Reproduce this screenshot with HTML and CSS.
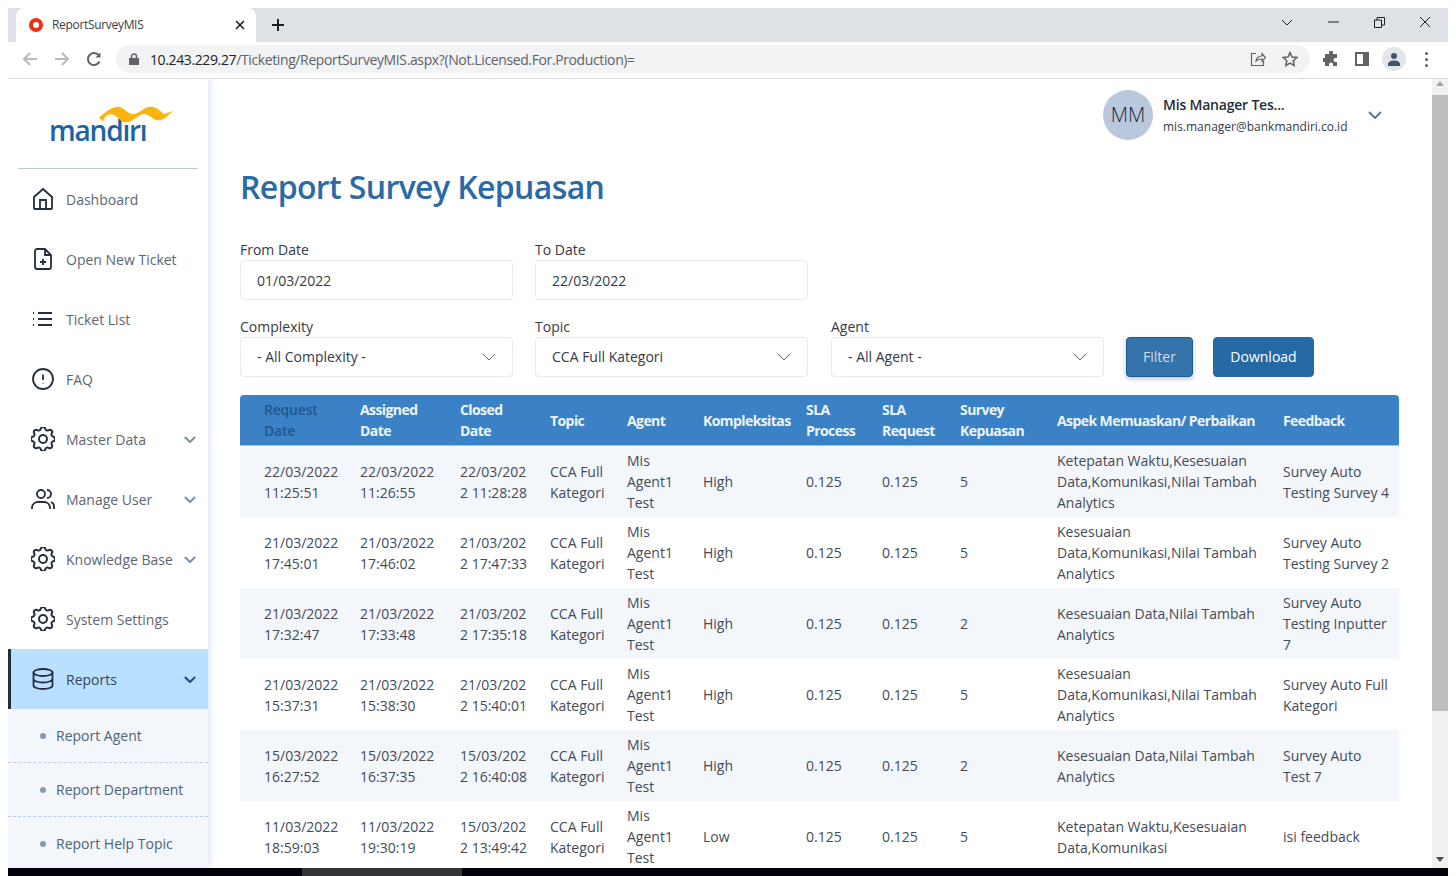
FILE: index.html
```html
<!DOCTYPE html>
<html lang="en">
<head>
    <meta charset="UTF-8">
    <title>ReportSurveyMIS</title>
    <link rel="stylesheet" href="styles.css">
</head>
<body>

<svg class="defs" width="0" height="0">
    <symbol id="cog" viewBox="3 3 18 18">
        <path d="M10.325 4.317c.426-1.756 2.924-1.756 3.35 0a1.724 1.724 0 002.573 1.066c1.543-.94 3.31.826 2.37 2.37a1.724 1.724 0 001.065 2.572c1.756.426 1.756 2.924 0 3.35a1.724 1.724 0 00-1.066 2.573c.94 1.543-.826 3.31-2.37 2.37a1.724 1.724 0 00-2.572 1.065c-.426 1.756-2.924 1.756-3.35 0a1.724 1.724 0 00-2.573-1.066c-1.543.94-3.31-.826-2.37-2.37a1.724 1.724 0 00-1.065-2.572c-1.756-.426-1.756-2.924 0-3.35a1.724 1.724 0 001.066-2.573c-.94-1.543.826-3.31 2.37-2.37.996.608 2.296.07 2.572-1.065z"/>
        <path d="M15 12a3 3 0 11-6 0 3 3 0 016 0z"/>
    </symbol>
    <symbol id="chev" viewBox="0 0 14 8">
        <path d="M1 1l6 6 6-6"/>
    </symbol>
</svg>

<div id="window">
    <div id="tabstrip">
        <div class="tab">
            <svg class="favicon" width="14" height="14" viewBox="0 0 14 14"><circle cx="7" cy="7" r="5" fill="none" stroke="#f03010" stroke-width="4"/></svg>
            <span class="tab-title">ReportSurveyMIS</span>
            <svg class="tab-close" width="10" height="10" viewBox="0 0 10 10"><path d="M1 1l8 8M9 1l-8 8"/></svg>
        </div>
        <svg class="tab-new" width="14" height="14" viewBox="0 0 14 14"><path d="M7 1v12M1 7h12"/></svg>
        <div class="win-btns">
            <span class="win-btn"><svg width="12" height="7" viewBox="0 0 12 7"><path d="M1 1l5 5 5-5"/></svg></span>
            <span class="win-btn"><svg width="11" height="2" viewBox="0 0 11 2"><path d="M0 1h11"/></svg></span>
            <span class="win-btn"><svg width="11" height="11" viewBox="0 0 11 11"><path d="M.5 3h7v7.500h-7zM3 3V.5h7.500V8H7.500"/></svg></span>
            <span class="win-btn"><svg width="12" height="12" viewBox="0 0 12 12"><path d="M1 1l10 10M11 1L1 11"/></svg></span>
        </div>
    </div>

    <div id="toolbar">
        <span class="tool-btn"><svg width="16" height="16" viewBox="0 0 16 16" class="off"><path d="M15 8H2M8 2L2 8l6 6"/></svg></span>
        <span class="tool-btn"><svg width="16" height="16" viewBox="0 0 16 16" class="off"><path d="M1 8h13M8 2l6 6-6 6"/></svg></span>
        <span class="tool-btn"><svg width="16" height="16" viewBox="0 0 16 16" class="on"><path d="M13.500 10.500A6 6 0 1 1 13 4.700"/><path class="solid" d="M14.500 1.500v5h-5z"/></svg></span>
        <div class="urlbar">
            <svg class="lock" width="10" height="12" viewBox="0 0 10 12"><path class="solid" d="M0 5h10v7H0z"/><path class="ring" d="M2.500 5V3.500a2.500 2.500 0 0 1 5 0V5"/></svg>
            <span class="url"><b>10.243.229.27</b>/Ticketing/ReportSurveyMIS.aspx?(Not.Licensed.For.Production)=</span>
            <svg class="url-icon" width="16" height="16" viewBox="0 0 16 16"><path d="M6 2.500H1.500v12h12V10M6 10c.5-3 3-5 6-5V2.500L15.500 6.500 12 10.500V8c-2.500 0-4.500.5-6 2z"/></svg>
            <svg class="url-icon star" width="16" height="16" viewBox="0 0 16 16"><path d="M8 1.500l2 4.500 4.800.5-3.600 3.200 1 4.800L8 12.100l-4.200 2.400 1-4.800L1.200 6.500 6 6z"/></svg>
        </div>
        <span class="tool-btn"><svg class="puzzle" width="16" height="16" viewBox="0 0 16 16"><path class="solid" d="M6 1.500a2 2 0 0 1 4 0V3h4v4h-1.500a2 2 0 0 0 0 4H14v4h-4v-1.500a2 2 0 0 0-4 0V15H2v-4H.5a2 2 0 0 1 0-4H2V3h4z"/></svg></span>
        <span class="tool-btn"><svg width="14" height="14" viewBox="0 0 14 14"><path class="solid" fill-rule="evenodd" d="M0 0h14v14H0zM2 2v10h6V2z"/></svg></span>
        <span class="tool-btn"><span class="profile"><svg width="14" height="14" viewBox="0 0 14 14"><circle cx="7" cy="4" r="3" fill="#47536b"/><path fill="#47536b" d="M1 14v-2c0-2 3-3.500 6-3.500s6 1.500 6 3.500v2z"/></svg></span></span>
        <span class="tool-btn dots"><i></i><i></i><i></i></span>
    </div>

    <div id="page">
        <div id="sidebar">
            <div class="logo" aria-label="mandiri">
                <svg class="logo-wave" width="76" height="18" viewBox="0 0 76 22" preserveAspectRatio="none"><path d="M1 14C8 7 13 2 19 1c7-1 10 9 16 9 6 0 10-8 17-9 6-1 12 7 14 9l9-4-8 9c-2 1-6 3-9 2-5-2-8-8-13-7-6 1-10 10-17 10C22 20 18 9 12 10 8 11 6 15 5 19z"/></svg>
                <span class="logo-text">mandırı</span>
            </div>
            <ul class="nav">
                <li class="nav-item">
                    <svg class="nav-icon" width="24" height="24" viewBox="0 0 24 24"><path d="M3 21V10l9-8 9 8v11a1 1 0 0 1-1 1H4a1 1 0 0 1-1-1zM9 22V13h6v9"/></svg>
                    <span>Dashboard</span>
                </li>
                <li class="nav-item">
                    <svg class="nav-icon" width="24" height="24" viewBox="0 0 24 24"><path d="M14 2H6a2 2 0 0 0-2 2v16a2 2 0 0 0 2 2h12a2 2 0 0 0 2-2V8zM14 2v6h6M12 18v-6M9 15h6"/></svg>
                    <span>Open New Ticket</span>
                </li>
                <li class="nav-item">
                    <svg class="nav-icon" width="24" height="24" viewBox="0 0 24 24"><path d="M7 6h14M7 12h14M7 18h14M2 6h1M2 12h1M2 18h1"/></svg>
                    <span>Ticket List</span>
                </li>
                <li class="nav-item">
                    <svg class="nav-icon" width="24" height="24" viewBox="0 0 24 24"><circle cx="12" cy="12" r="10"/><path d="M12 7.500v5.500M12 16.500v.5"/></svg>
                    <span>FAQ</span>
                </li>
                <li class="nav-item">
                    <svg class="nav-icon" width="24" height="24"><use href="#cog"/></svg>
                    <span>Master Data</span>
                    <svg class="nav-chev" width="12" height="7"><use href="#chev"/></svg>
                </li>
                <li class="nav-item">
                    <svg class="nav-icon" width="24" height="24" viewBox="0 0 24 24"><circle cx="10" cy="7" r="4"/><path d="M1 22v-2a6 6 0 0 1 6-5h6a6 6 0 0 1 6 5v2M16 3a4 4 0 0 1 0 8M20 15a5 5 0 0 1 3 5v2"/></svg>
                    <span>Manage User</span>
                    <svg class="nav-chev" width="12" height="7"><use href="#chev"/></svg>
                </li>
                <li class="nav-item">
                    <svg class="nav-icon" width="24" height="24"><use href="#cog"/></svg>
                    <span>Knowledge Base</span>
                    <svg class="nav-chev" width="12" height="7"><use href="#chev"/></svg>
                </li>
                <li class="nav-item">
                    <svg class="nav-icon" width="24" height="24"><use href="#cog"/></svg>
                    <span>System Settings</span>
                </li>
                <li class="nav-item selected">
                    <svg class="nav-icon" width="24" height="24" viewBox="0 0 24 24"><ellipse cx="12" cy="5.500" rx="9.500" ry="3.500"/><path d="M2.500 5.500v13c0 2 4.500 3.500 9.500 3.500s9.500-1.500 9.500-3.500v-13M2.500 12c0 2 4.500 3.500 9.500 3.500s9.500-1.500 9.500-3.500"/></svg>
                    <span>Reports</span>
                    <svg class="nav-chev" width="12" height="7"><use href="#chev"/></svg>
                </li>
            </ul>
            <ul class="subnav">
                <li>Report Agent</li>
                <li>Report Department</li>
                <li>Report Help Topic</li>
            </ul>
        </div>

        <div id="main">
            <div class="user">
                <div class="avatar">MM</div>
                <div class="user-info">
                    <div class="user-name">Mis Manager Tes...</div>
                    <div class="user-mail">mis.manager@bankmandiri.co.id</div>
                </div>
                <svg class="user-chev" width="14" height="8"><use href="#chev"/></svg>
            </div>

            <h1>Report Survey Kepuasan</h1>

            <div class="form-row first">
                <div class="field">
                    <label>From Date</label>
                    <div class="box">01/03/2022</div>
                </div>
                <div class="field">
                    <label>To Date</label>
                    <div class="box">22/03/2022</div>
                </div>
            </div>
            <div class="form-row">
                <div class="field">
                    <label>Complexity</label>
                    <div class="box select">- All Complexity -<svg class="box-chev" width="14" height="8"><use href="#chev"/></svg></div>
                </div>
                <div class="field">
                    <label>Topic</label>
                    <div class="box select">CCA Full Kategori<svg class="box-chev" width="14" height="8"><use href="#chev"/></svg></div>
                </div>
                <div class="field">
                    <label>Agent</label>
                    <div class="box select">- All Agent -<svg class="box-chev" width="14" height="8"><use href="#chev"/></svg></div>
                </div>
                <div class="buttons">
                    <span class="btn btn-filter">Filter</span>
                    <span class="btn btn-download">Download</span>
                </div>
            </div>

            <table>
                <colgroup>
                    <col class="c1"><col class="c2"><col class="c3"><col class="c4"><col class="c5"><col class="c6">
                    <col class="c7"><col class="c8"><col class="c9"><col class="c10"><col class="c11">
                </colgroup>
                <thead>
                    <tr>
                        <th class="dim">Request Date</th>
                        <th>Assigned Date</th>
                        <th>Closed Date</th>
                        <th>Topic</th>
                        <th>Agent</th>
                        <th>Kompleksitas</th>
                        <th>SLA Process</th>
                        <th>SLA Request</th>
                        <th>Survey Kepuasan</th>
                        <th>Aspek Memuaskan/ Perbaikan</th>
                        <th>Feedback</th>
                    </tr>
                </thead>
                <tbody>
                    <tr>
                        <td>22/03/2022 11:25:51</td><td>22/03/2022 11:26:55</td><td>22/03/2022 11:28:28</td>
                        <td>CCA Full Kategori</td><td>Mis Agent1 Test</td><td>High</td><td>0.125</td><td>0.125</td><td>5</td>
                        <td>Ketepatan Waktu,Kesesuaian Data,Komunikasi,Nilai Tambah Analytics</td><td>Survey Auto Testing Survey 4</td>
                    </tr>
                    <tr>
                        <td>21/03/2022 17:45:01</td><td>21/03/2022 17:46:02</td><td>21/03/2022 17:47:33</td>
                        <td>CCA Full Kategori</td><td>Mis Agent1 Test</td><td>High</td><td>0.125</td><td>0.125</td><td>5</td>
                        <td>Kesesuaian Data,Komunikasi,Nilai Tambah Analytics</td><td>Survey Auto Testing Survey 2</td>
                    </tr>
                    <tr>
                        <td>21/03/2022 17:32:47</td><td>21/03/2022 17:33:48</td><td>21/03/2022 17:35:18</td>
                        <td>CCA Full Kategori</td><td>Mis Agent1 Test</td><td>High</td><td>0.125</td><td>0.125</td><td>2</td>
                        <td>Kesesuaian Data,Nilai Tambah Analytics</td><td>Survey Auto Testing Inputter 7</td>
                    </tr>
                    <tr>
                        <td>21/03/2022 15:37:31</td><td>21/03/2022 15:38:30</td><td>21/03/2022 15:40:01</td>
                        <td>CCA Full Kategori</td><td>Mis Agent1 Test</td><td>High</td><td>0.125</td><td>0.125</td><td>5</td>
                        <td>Kesesuaian Data,Komunikasi,Nilai Tambah Analytics</td><td>Survey Auto Full Kategori</td>
                    </tr>
                    <tr>
                        <td>15/03/2022 16:27:52</td><td>15/03/2022 16:37:35</td><td>15/03/2022 16:40:08</td>
                        <td>CCA Full Kategori</td><td>Mis Agent1 Test</td><td>High</td><td>0.125</td><td>0.125</td><td>2</td>
                        <td>Kesesuaian Data,Nilai Tambah Analytics</td><td>Survey Auto Test 7</td>
                    </tr>
                    <tr>
                        <td>11/03/2022 18:59:03</td><td>11/03/2022 19:30:19</td><td>15/03/2022 13:49:42</td>
                        <td>CCA Full Kategori</td><td>Mis Agent1 Test</td><td>Low</td><td>0.125</td><td>0.125</td><td>5</td>
                        <td>Ketepatan Waktu,Kesesuaian Data,Komunikasi</td><td>isi feedback</td>
                    </tr>
                </tbody>
            </table>
        </div>

        <div id="scrollbar">
            <span class="arrow-up"></span>
            <span class="thumb"></span>
            <span class="arrow-down"></span>
        </div>
    </div>

    <div id="taskbar">
        <span class="task-active"></span>
        <span class="task-clock">11:32 AM</span>
    </div>
</div>

</body>
</html>
```

FILE: styles.css
```css
*{
    margin: 0;
    padding: 0;
    box-sizing: border-box;
}
ul, ol{
    list-style: none;
}
html, body{
    height: 100%;
    overflow: hidden;
    background: #fff;
}
body{
    font-family: "Open Sans", "Liberation Sans", sans-serif;
    font-size: 14px;
    color: #343a46;
}
.defs{
    position: absolute;
}
svg{
    flex: none;
    display: block;
}
#window{
    height: 876px;
    padding: 8px 8px 0;
    display: flex;
    flex-direction: column;
}

/* browser chrome */
#tabstrip{
    height: 34px;
    background: #dee1e6;
    display: flex;
    align-items: center;
    padding-left: 8px;
    flex: none;
}
.tab{
    width: 240px;
    height: 34px;
    background: #fff;
    border-radius: 8px 8px 0 0;
    display: flex;
    align-items: center;
    padding: 0 11px 0 13px;
}
.tab-title{
    font-size: 12px;
    margin-left: 9px;
    color: #3c4043;
    letter-spacing: -.32px;
    padding-bottom: 1px;
}
.tab-close{
    margin-left: auto;
}
.tab-close path, .tab-new path{
    stroke: #202124;
    stroke-width: 1.6;
    fill: none;
}
.tab-new{
    margin-left: 15px;
}
.tab-new path{
    stroke-width: 2;
}
.win-btns{
    margin-left: auto;
    display: flex;
    align-self: flex-start;
}
.win-btn{
    width: 46px;
    height: 28px;
    display: flex;
    align-items: center;
    justify-content: center;
}
.win-btn path{
    stroke: #202124;
    stroke-width: 1;
    fill: none;
}
#toolbar{
    height: 37px;
    flex: none;
    background: #fff;
    border-bottom: 1px solid #dadce0;
    display: flex;
    align-items: center;
    padding: 0 5px 2px 6px;
}
.tool-btn{
    width: 32px;
    height: 28px;
    display: flex;
    align-items: center;
    justify-content: center;
}
.tool-btn path{
    fill: none;
    stroke: #5f6368;
    stroke-width: 2;
}
.tool-btn .off path{
    stroke: #b8babd;
}
.tool-btn path.solid, .urlbar path.solid{
    fill: #5f6368;
    stroke: none;
}
.tool-btn .profile path{
    fill: #47536b;
    stroke: none;
}
.puzzle{
    margin-left: 1px;
}
.profile{
    width: 24px;
    height: 24px;
    border-radius: 50%;
    background: #e2e5ea;
    display: flex;
    align-items: center;
    justify-content: center;
}
.dots{
    flex-direction: column;
    gap: 3px;
}
.dots i{
    width: 3px;
    height: 3px;
    border-radius: 50%;
    background: #5f6368;
}
.urlbar{
    width: 1194px;
    height: 28px;
    margin: 0 4px 0 6px;
    background: #f1f3f4;
    border-radius: 14px;
    display: flex;
    align-items: center;
    padding: 0 12px 0 13px;
}
.lock .ring{
    fill: none;
    stroke: #5f6368;
    stroke-width: 1.500;
}
.url{
    margin-left: 11px;
    font-size: 14px;
    color: #5f6368;
    letter-spacing: -.38px;
}
.url b{
    font-weight: 400;
    color: #202124;
}
.url-icon{
    margin-left: 16px;
}
.lock + .url + .url-icon{
    margin-left: auto;
}
.url-icon path{
    fill: none;
    stroke: #5f6368;
    stroke-width: 1.200;
}
.url-icon.star path{
    stroke-width: 1.500;
}

/* page */
#page{
    flex: 1;
    min-height: 0;
    display: flex;
    overflow: hidden;
}
#sidebar{
    width: 200px;
    flex: none;
    background: #fff;
    box-shadow: 2px 0 6px #dce7f7;
    position: relative;
    overflow: hidden;
}
.logo{
    height: 90px;
    margin: 0 10px;
    border-bottom: 1px solid #b9c9db;
    position: relative;
    padding: 33px 0 0 31px;
}
.logo-text{
    display: block;
    font-size: 28px;
    line-height: 36px;
    font-weight: 600;
    color: #1e63a3;
    letter-spacing: -1.2px;
}
.logo-wave{
    position: absolute;
    left: 80px;
    top: 27px;
}
.logo-wave path{
    fill: #fbb40d;
}
.nav-item{
    height: 60px;
    display: flex;
    align-items: center;
    border-left: 3px solid transparent;
    padding: 0 12px 0 20px;
    color: #5c6672;
}
.nav-item span{
    margin-left: 11px;
}
.nav-icon{
    fill: none;
    stroke: #252e3e;
    stroke-width: 1.800;
}
.nav-icon use{
    stroke-width: 1.500;
}
.nav-chev{
    margin-left: auto;
    fill: none;
    stroke: #7f92ab;
    stroke-width: 2.400;
}
.nav-item.selected{
    background: #b9e0fe;
    border-left-color: #252e3e;
    color: #36465a;
}
.selected .nav-chev{
    stroke: #1f4f86;
}
.subnav{
    background: #f3f6fb;
}
.subnav li{
    height: 54px;
    line-height: 53px;
    padding-left: 48px;
    position: relative;
    color: #4d6378;
    border-bottom: 1px dashed #bccde0;
}
.subnav li:before{
    content: "";
    position: absolute;
    left: 32px;
    top: 24px;
    width: 6px;
    height: 6px;
    border-radius: 50%;
    background: #8899b0;
}

#main{
    flex: 1;
    min-width: 0;
    padding: 0 33px 0 32px;
    overflow: hidden;
}
.user{
    display: flex;
    align-items: center;
    padding: 11px 0 0 863px;
}
.avatar{
    width: 50px;
    height: 50px;
    border-radius: 50%;
    background: #b9c8dc;
    text-align: center;
    line-height: 49px;
    font-size: 20px;
    font-weight: 300;
    color: #1f2838;
}
.user-info{
    margin-left: 10px;
}
.user-name{
    font-size: 14px;
    line-height: 20px;
    font-weight: 600;
    color: #252c38;
    letter-spacing: -.2px;
}
.user-mail{
    font-size: 12px;
    line-height: 17px;
    margin-top: 3px;
    color: #343a46;
}
.user-chev{
    margin-left: 20px;
    fill: none;
    stroke: #55708f;
    stroke-width: 1.800;
}
h1{
    margin-top: 25px;
    font-size: 32px;
    line-height: 44px;
    font-weight: 600;
    color: #2a6aa6;
    letter-spacing: -.62px;
}
.form-row{
    display: flex;
    align-items: flex-end;
    gap: 22px;
    margin-top: 17px;
}
.form-row.first{
    margin-top: 31px;
}
.field{
    width: 273px;
}
.field + .field + .field{
    margin-left: 1px;
}
.field label{
    display: block;
    line-height: 20px;
    color: #343a46;
}
.box{
    height: 40px;
    border: 1px solid #e5ebf2;
    border-radius: 4px;
    padding: 0 16px;
    display: flex;
    align-items: center;
    justify-content: space-between;
    color: #343a46;
}
.box.select{
    padding-bottom: 2px;
}
.box-chev{
    fill: none;
    stroke: #5f6b7a;
    stroke-width: 1;
    margin-top: 2px;
}
.buttons{
    display: flex;
    gap: 20px;
}
.btn{
    height: 40px;
    line-height: 38px;
    border-radius: 4px;
    text-align: center;
    border: 1px solid #2569a5;
}
.btn-filter{
    width: 67px;
    background: #3573ab;
    color: #cfdeec;
    box-shadow: 0 2px 5px #b6c6d6;
    border-color: #22598f;
}
.btn-download{
    width: 101px;
    background: #2569a5;
    color: #fff;
}

table{
    width: 1159px;
    margin-top: 18px;
    border-collapse: separate;
    border-spacing: 0;
    table-layout: fixed;
}
.c1{ width: 110px; }
.c2{ width: 100px; }
.c3{ width: 90px; }
.c4{ width: 77px; }
.c5{ width: 76px; }
.c6{ width: 103px; }
.c7{ width: 76px; }
.c8{ width: 78px; }
.c9{ width: 97px; }
.c10{ width: 226px; }
.c11{ width: 126px; }
th{
    height: 51px;
    background: #3a82c5;
    border-bottom: 1px solid #a9bfd6;
    color: #eef4fa;
    font-weight: 700;
    line-height: 21px;
    letter-spacing: -.58px;
    text-align: left;
    padding: 0 4px 0 10px;
}
th:first-child{
    padding-left: 24px;
    border-top-left-radius: 4px;
}
th:last-child{
    border-top-right-radius: 4px;
}
th.dim{
    color: #21568f;
    font-weight: 600;
    letter-spacing: -.2px;
}
td{
    height: 71px;
    line-height: 21px;
    padding: 0 10px;
    color: #434b58;
    word-break: break-all;
    overflow-wrap: anywhere;
}
td:nth-child(n+4){
    word-break: normal;
}
td:first-child{
    padding-left: 24px;
}
td:last-child{
    padding-right: 8px;
}
tbody tr:nth-child(odd) td{
    background: #f3f6fb;
}

/* scrollbar and taskbar */
#scrollbar{
    width: 16px;
    flex: none;
    background: #f1f1f1;
    display: flex;
    flex-direction: column;
    align-items: center;
}
.arrow-up, .arrow-down{
    width: 0;
    height: 0;
    border: 4px solid transparent;
}
.arrow-up{
    margin-top: 2px;
    border-top: 0;
    border-bottom: 5px solid #a3a3a3;
}
.thumb{
    width: 16px;
    height: 616px;
    margin-top: 9px;
    background: #bebebe;
}
.arrow-down{
    margin-top: auto;
    margin-bottom: 6px;
    border-bottom: 0;
    border-top: 5px solid #505050;
}
#taskbar{
    height: 8px;
    flex: none;
    background: #02020a;
    display: flex;
    overflow: hidden;
    padding-left: 294px;
}
.task-active{
    width: 160px;
    background: #333338;
}
.task-clock{
    margin-left: auto;
    margin-right: 62px;
    padding-top: 4px;
    font-size: 13px;
    line-height: 16px;
    color: #fff;
    width: 52px;
    white-space: nowrap;
    overflow: hidden;
}
```
